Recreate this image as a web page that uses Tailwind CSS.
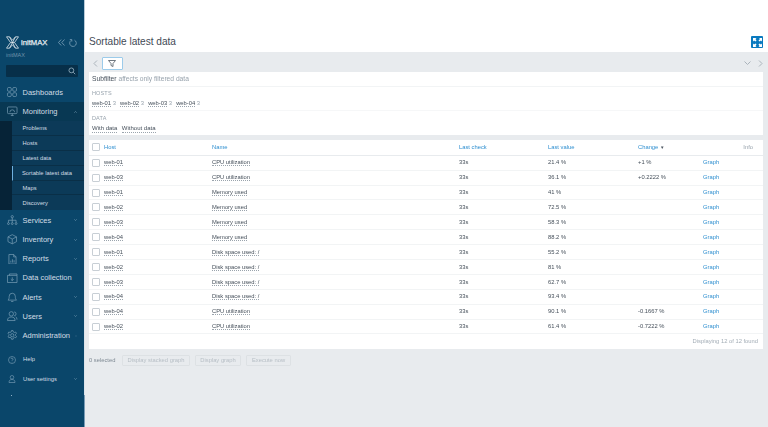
<!DOCTYPE html>
<html lang="en">
<head>
  <meta charset="UTF-8">
  <title>Sortable latest data</title>
  <script src="https://cdn.jsdelivr.net/npm/@tailwindcss/browser@4"></script>
</head>
<body class="h-[427px] w-[768px] overflow-hidden bg-[#e8ebee] font-['Liberation_Sans',Arial,sans-serif] text-[5.8px] text-[#454f5a]">
<div class="flex h-[427px] blur-[0.35px]">

  <!-- Sidebar -->
  <aside class="flex w-[84px] shrink-0 flex-col bg-[#0a466a] text-[#d2dde5]">
    <div class="mt-[36px] flex h-[13px] items-center pl-[6px]">
      <svg class="h-[13px] w-[13px] shrink-0" viewBox="0 0 13 13" fill="none" stroke="#dfe7ec" stroke-width=".8"><path d="M.5 .8h3l3 3.400 3-3.400h3L8.500 6.500l4 5.700h-3l-3-3.400-3 3.400h-3l4-5.700z"/><path d="M3.500 .8l6 11.400M9.500 .8l-6 11.400M4.500 6.500h4"/></svg>
      <span class="ml-[2px] text-[7.7px] font-normal text-[#e4ebf0] [-webkit-text-stroke:0.25px_#e4ebf0]">initMAX</span>
      <svg class="ml-[10px] h-[7px] w-[7px] shrink-0" viewBox="0 0 7 7" fill="none" stroke="#8fb0c6" stroke-width=".7"><path d="M3.200 .5L.5 3.500l2.700 3M6.500 .5L3.800 3.500l2.700 3"/></svg>
      <svg class="ml-[4px] h-[8px] w-[8px] shrink-0" viewBox="0 0 8 8" fill="none" stroke="#8fb0c6" stroke-width=".7"><path d="M5.500 1.200A3.300 3.300 0 1 1 2 1.500M.8 .6h2v2"/></svg>
    </div>
    <div class="mt-[2.500px] h-[7px] pl-[6px] text-[5.5px] leading-[7px] text-[#6f93ab]">initMAX</div>
    <div class="ml-[6px] mt-[6.500px] flex h-[12px] w-[72px] items-center justify-end rounded-[1px] bg-[#072f49] pr-[2px]">
      <svg class="h-[8px] w-[8px]" viewBox="0 0 10 10" fill="none" stroke="#9db6c7"><circle cx="4.200" cy="4.200" r="3"/><path d="M6.500 6.500L9 9"/></svg>
    </div>

    <a class="mt-[6px] flex h-[19px] items-center gap-[5px] pl-[7px] text-[7.5px]">
      <svg class="h-[10.500px] w-[10.500px] shrink-0" viewBox="0 0 11 11" fill="none" stroke="#7fa3ba" stroke-width=".7"><rect x=".5" y=".5" width="4" height="4" rx="1.300"/><rect x="6" y=".5" width="4" height="4" rx="1.300"/><rect x=".5" y="6" width="4" height="4" rx="1.300"/><rect x="6" y="6" width="4" height="4" rx="1.300"/></svg>
      Dashboards
    </a>
    <a class="flex h-[19px] items-center gap-[5px] bg-[#083853] pl-[7px] pr-[7px] text-[7.5px]">
      <svg class="h-[10.500px] w-[10.500px] shrink-0" viewBox="0 0 11 11" fill="none" stroke="#7fa3ba" stroke-width=".7"><rect x=".5" y="1" width="10" height="7" rx="1"/><path d="M4 10h3M5.500 8v2M3 6.500a2.500 2.500 0 0 1 5 0"/></svg>
      Monitoring
      <svg class="ml-auto h-[2px] w-[3px]" viewBox="0 0 3 2" fill="none" stroke="#8fb0c6" stroke-width=".5"><path d="M.3 1.700L1.500 .5l1.200 1.200"/></svg>
    </a>
    <div class="flex">
      <div class="w-[11.500px] bg-[#062337]"></div>
      <div class="flex-1 text-[5.8px]">
        <div class="flex h-[14.9px] items-center border-b border-[#0a2f47] bg-[#0c3a58] pl-[11px] pt-[1px]">Problems</div>
        <div class="flex h-[14.9px] items-center border-b border-[#0a2f47] bg-[#0c3a58] pl-[11px] pt-[1px]">Hosts</div>
        <div class="flex h-[14.9px] items-center border-b border-[#0a2f47] bg-[#0c3a58] pl-[11px] pt-[1px]">Latest data</div>
        <div class="flex h-[14.9px] items-center border-b border-l-[1.5px] border-b-[#0a2f47] border-l-[#6fb0df] bg-[#0c3a58] pl-[9.500px] pt-[1px]">Sortable latest data</div>
        <div class="flex h-[14.9px] items-center border-b border-[#0a2f47] bg-[#0c3a58] pl-[11px] pt-[1px]">Maps</div>
        <div class="flex h-[14.9px] items-center bg-[#0c3a58] pl-[11px]">Discovery</div>
      </div>
    </div>

    <div class="flex flex-col whitespace-nowrap pt-[.5px] text-[7.5px]">
      <a class="flex h-[19.2px] items-center gap-[5px] pl-[7px] pr-[7px]">
        <svg class="h-[10.500px] w-[10.500px] shrink-0" viewBox="0 0 11 11" fill="none" stroke="#7fa3ba" stroke-width=".7"><circle cx="5.500" cy="1.800" r="1.200"/><path d="M5.500 3v2.500M1.500 8V5.500h8V8M5.500 5.500V8"/><circle cx="1.500" cy="9" r="1"/><circle cx="5.500" cy="9" r="1"/><circle cx="9.500" cy="9" r="1"/></svg>
        Services
        <svg class="ml-auto h-[2px] w-[3px]" viewBox="0 0 3 2" fill="none" stroke="#8fb0c6" stroke-width=".5"><path d="M.3 .3L1.500 1.500 2.700 .3"/></svg>
      </a>
      <a class="flex h-[19.2px] items-center gap-[5px] pl-[7px] pr-[7px]">
        <svg class="h-[10.500px] w-[10.500px] shrink-0" viewBox="0 0 11 11" fill="none" stroke="#7fa3ba" stroke-width=".7"><path d="M5.500 .7l4.500 2.300v5l-4.500 2.300L1 8V3zM1 3l4.500 2.300L10 3M5.500 5.300v5"/></svg>
        Inventory
        <svg class="ml-auto h-[2px] w-[3px]" viewBox="0 0 3 2" fill="none" stroke="#8fb0c6" stroke-width=".5"><path d="M.3 .3L1.500 1.500 2.700 .3"/></svg>
      </a>
      <a class="flex h-[19.2px] items-center gap-[5px] pl-[7px] pr-[7px]">
        <svg class="h-[10.500px] w-[10.500px] shrink-0" viewBox="0 0 11 11" fill="none" stroke="#7fa3ba" stroke-width=".7"><path d="M2 .5h5l2.500 2.500v7.500H2zM7 .5V3h2.500M4 9V7M5.700 9V5.500M7.400 9V6.500"/></svg>
        Reports
        <svg class="ml-auto h-[2px] w-[3px]" viewBox="0 0 3 2" fill="none" stroke="#8fb0c6" stroke-width=".5"><path d="M.3 .3L1.500 1.500 2.700 .3"/></svg>
      </a>
      <a class="flex h-[19.2px] items-center gap-[5px] pl-[7px] pr-[7px]">
        <svg class="h-[10.500px] w-[10.500px] shrink-0" viewBox="0 0 11 11" fill="none" stroke="#7fa3ba" stroke-width=".7"><path d="M.5 2.500h10v7.500H.5zM2.500 2.500V1h8v1.500M5.500 4.500v3.500M4 6.500l1.500 1.500L7 6.500"/></svg>
        Data collection
        <svg class="ml-auto h-[2px] w-[3px]" viewBox="0 0 3 2" fill="none" stroke="#8fb0c6" stroke-width=".5"><path d="M.3 .3L1.500 1.500 2.700 .3"/></svg>
      </a>
      <a class="flex h-[19.2px] items-center gap-[5px] pl-[7px] pr-[7px]">
        <svg class="h-[10.500px] w-[10.500px] shrink-0" viewBox="0 0 11 11" fill="none" stroke="#7fa3ba" stroke-width=".7"><path d="M1 8.500c1-1 1.300-2 1.300-4a3.200 3.200 0 0 1 6.400 0c0 2 .3 3 1.300 4zM4.300 10h2.400"/></svg>
        Alerts
        <svg class="ml-auto h-[2px] w-[3px]" viewBox="0 0 3 2" fill="none" stroke="#8fb0c6" stroke-width=".5"><path d="M.3 .3L1.500 1.500 2.700 .3"/></svg>
      </a>
      <a class="flex h-[19.2px] items-center gap-[5px] pl-[7px] pr-[7px]">
        <svg class="h-[10.500px] w-[10.500px] shrink-0" viewBox="0 0 11 11" fill="none" stroke="#7fa3ba" stroke-width=".7"><circle cx="4.500" cy="3" r="2.300"/><path d="M.5 10c0-2.500 1.500-3.700 4-3.700s4 1.200 4 3.700zM7.500 1a2 2 0 0 1 0 4M9 6c1 .5 1.500 1.500 1.500 3"/></svg>
        Users
        <svg class="ml-auto h-[2px] w-[3px]" viewBox="0 0 3 2" fill="none" stroke="#8fb0c6" stroke-width=".5"><path d="M.3 .3L1.500 1.500 2.700 .3"/></svg>
      </a>
      <a class="flex h-[19.2px] items-center gap-[5px] pl-[7px] pr-[7px]">
        <svg class="h-[10.500px] w-[10.500px] shrink-0" viewBox="0 0 11 11" fill="none" stroke="#7fa3ba" stroke-width=".7"><circle cx="5.500" cy="5.500" r="1.700"/><path d="M4.700.6h1.600l.3 1.400 1.200.6 1.300-.5.800 1.400-1 1 .1 1.300 1 .9-.8 1.400-1.300-.5-1.200.7-.3 1.400H4.700l-.3-1.400-1.200-.7-1.300.5-.8-1.400 1-.9V4.500l-1-1 .8-1.400 1.300.5 1.200-.6z"/></svg>
        Administration
        <svg class="ml-auto h-[2px] w-[3px]" viewBox="0 0 3 2" fill="none" stroke="#8fb0c6" stroke-width=".5"><path d="M.3 .3L1.500 1.500 2.700 .3"/></svg>
      </a>
    </div>

    <div class="mt-[5px] flex flex-col text-[5.8px]">
      <a class="flex h-[19.2px] items-center gap-[7px] pl-[8px] pr-[7px]">
        <svg class="h-[8px] w-[8px] shrink-0" viewBox="0 0 8 8" fill="none" stroke="#7fa3ba" stroke-width=".6"><circle cx="4" cy="4" r="3.500"/><path d="M3 3a1 1 0 1 1 1.500 1c-.4.200-.5.500-.5 1M4 5.800v.5"/></svg>
        Help
      </a>
      <a class="flex h-[19.2px] items-center gap-[7px] pl-[8px] pr-[7px]">
        <svg class="h-[8px] w-[8px] shrink-0" viewBox="0 0 8 8" fill="none" stroke="#7fa3ba" stroke-width=".6"><circle cx="4" cy="2.300" r="1.800"/><path d="M1 7.500c0-2 1-3 3-3s3 1 3 3z"/></svg>
        User settings
        <svg class="ml-auto h-[2px] w-[3px]" viewBox="0 0 3 2" fill="none" stroke="#8fb0c6" stroke-width=".5"><path d="M.3 .3L1.500 1.500 2.700 .3"/></svg>
      </a>
    </div>
    <div class="ml-[11px] mt-[6px] h-[1px] w-[1px] bg-[#8fb0c6]"></div>
  </aside>

  <!-- thin edge beside the sidebar -->
  <div class="flex w-[1px] shrink-0 flex-col">
    <div class="h-[30px] bg-[#b9cbd8]"></div>
    <div class="h-[365px] bg-[#dbe3ea]"></div>
    <div class="flex-1 bg-[#7a9cb6]"></div>
  </div>

  <!-- Main -->
  <main class="flex min-w-0 flex-1 flex-col">
    <header class="flex h-[52px] shrink-0 items-end justify-between bg-white pb-[3px] pl-[4px] pr-[5px]">
      <h1 class="pt-[1px] text-[10.1px] leading-[14px] text-[#3f4a55]">Sortable latest data</h1>
      <button class="mb-[1px] flex h-[12px] w-[12px] items-center justify-center rounded-[1px] bg-[#0a7abf]">
        <svg class="h-[9px] w-[9px]" viewBox="0 0 9 9" fill="#fff"><path d="M0 0h3.500L2.500 1l1 1.500-1 1L1 2.500 0 3.500zM9 0v3.500L8 2.500l-1.500 1-1-1L7 1 6 0zM0 9V5.500l1 1 1.500-1 1 1L2.500 8l1 1zM9 9H5.500l1-1-1-1.500 1-1L8 6.500l1-1z"/></svg>
      </button>
    </header>

    <div class="flex h-[20px] shrink-0 items-start justify-between pl-[7.5px] pr-[5px] pt-[5px]">
      <div class="flex h-[13px] items-center gap-[4px]">
        <svg class="h-[7px] w-[5px]" viewBox="0 0 5 7" fill="none" stroke="#aab3bb"><path d="M4 .5L1 3.500 4 6.500"/></svg>
        <span class="flex h-[13px] w-[21px] items-center justify-center rounded-[1px] border border-[#9ccbea] bg-white">
          <svg class="h-[7px] w-[8px]" viewBox="0 0 8 7" fill="none" stroke="#4b5560" stroke-width=".8"><path d="M.5 .5h7L5 3.500V6.500L3 5.500V3.500z"/></svg>
        </span>
      </div>
      <div class="flex h-[13px] items-center gap-[7px]">
        <svg class="h-[5px] w-[7px]" viewBox="0 0 7 5" fill="none" stroke="#aab3bb"><path d="M.5 .5L3.500 3.500 6.500 .5"/></svg>
        <svg class="h-[7px] w-[5px]" viewBox="0 0 5 7" fill="none" stroke="#aab3bb"><path d="M1 .5L4 3.500 1 6.500"/></svg>
      </div>
    </div>

    <div class="ml-[4px] mr-[5px] shrink-0 bg-white">
      <div class="flex h-[14.5px] items-center border-b border-[#f2f4f5] pl-[3px] text-[6.7px]">
        <span>Subfilter</span>&nbsp;<span class="text-[#98a3ad]">affects only filtered data</span>
      </div>
      <div class="h-[24.5px] border-b border-[#f6f7f8] pl-[3px] pt-[3.5px]">
        <div class="text-[5.5px] leading-[7px] tracking-[.15px] text-[#98a3ad]">HOSTS</div>
        <div class="mt-[1.5px] flex gap-[4.200px] leading-[8px]">
          <span><span class="border-b border-dotted border-[#9aa4ad]">web-01</span> <span class="text-[#98a3ad]">3</span></span>
          <span><span class="border-b border-dotted border-[#9aa4ad]">web-02</span> <span class="text-[#98a3ad]">3</span></span>
          <span><span class="border-b border-dotted border-[#9aa4ad]">web-03</span> <span class="text-[#98a3ad]">3</span></span>
          <span><span class="border-b border-dotted border-[#9aa4ad]">web-04</span> <span class="text-[#98a3ad]">3</span></span>
        </div>
      </div>
      <div class="h-[24px] pl-[3px] pt-[4px]">
        <div class="text-[5.5px] leading-[7px] tracking-[.15px] text-[#98a3ad]">DATA</div>
        <div class="mt-[1.5px] flex gap-[4.500px] text-[6px] leading-[8px]">
          <span class="border-b border-dotted border-[#9aa4ad]">With data</span>
          <span class="border-b border-dotted border-[#9aa4ad]">Without data</span>
        </div>
      </div>
    </div>

    <div class="ml-[4px] mr-[5px] mt-[5px] shrink-0 bg-white">
      <div class="grid h-[15.8px] grid-cols-[12px_108px_247px_89px_90px_65px_1fr] items-center border-b-[1.5px] border-[#e8ebee] pb-[1px] pl-[3px] text-[#2f8fd0]">
        <span class="h-[8px] w-[8px] rounded-[1px] border border-[#c8cfd5]"></span>
        <span>Host</span><span>Name</span><span>Last check</span><span>Last value</span>
        <span>Change <span class="text-[4.5px] text-[#4b5560]">▼</span></span>
        <span class="pr-[10px] text-right text-[#98a3ad]">Info</span>
      </div>
      <div id="rows"></div>
      <div class="flex h-[14.2px] items-center justify-end pr-[5px] text-[#a3adb6]">Displaying 12 of 12 found</div>
    </div>

    <div class="ml-[4px] mt-[6px] flex items-center gap-[5px] text-[#7f8a94]">
      <span class="w-[26px] mr-[2px] whitespace-nowrap">0 selected</span>
      <span class="flex h-[11px] w-[68px] items-center justify-center rounded-[1px] border border-[#dde1e4] text-[#b6bec5]">Display stacked graph</span>
      <span class="flex h-[11px] w-[46px] items-center justify-center rounded-[1px] border border-[#dde1e4] text-[#b6bec5]">Display graph</span>
      <span class="flex h-[11px] w-[45px] items-center justify-center rounded-[1px] border border-[#dde1e4] text-[#b6bec5]">Execute now</span>
    </div>
  </main>
</div>
<script>
  const data = [
    ["web-01","CPU utilization","21.4 %","+1 %"],
    ["web-03","CPU utilization","36.1 %","+0.2222 %"],
    ["web-01","Memory used","41 %",""],
    ["web-02","Memory used","72.5 %",""],
    ["web-03","Memory used","58.3 %",""],
    ["web-04","Memory used","88.2 %",""],
    ["web-01","Disk space used: /","55.2 %",""],
    ["web-02","Disk space used: /","81 %",""],
    ["web-03","Disk space used: /","62.7 %",""],
    ["web-04","Disk space used: /","93.4 %",""],
    ["web-04","CPU utilization","90.1 %","-0.1667 %"],
    ["web-02","CPU utilization","61.4 %","-0.7222 %"]
  ];
  document.getElementById("rows").innerHTML = data.map(r => `
    <div class="grid h-[14.9px] grid-cols-[12px_108px_247px_89px_90px_65px_1fr] items-center border-b border-[#f2f4f5] pl-[3px]">
      <span class="h-[8px] w-[8px] rounded-[1px] border border-[#c8cfd5]"></span>
      <span><span class="border-b border-dotted border-[#9aa4ad]">${r[0]}</span></span>
      <span><span class="border-b border-dotted border-[#9aa4ad]">${r[1]}</span></span>
      <span>33s</span><span>${r[2]}</span><span>${r[3]}</span>
      <span class="text-[#2f8fd0]">Graph</span>
    </div>`).join("");
</script>
</body>
</html>
